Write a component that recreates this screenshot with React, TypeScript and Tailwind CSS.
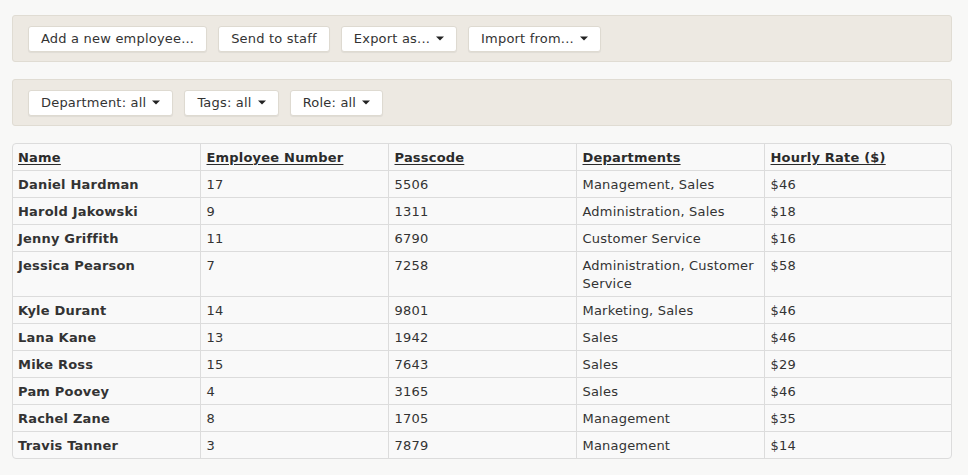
import React from "react";

const rows = [
  ["Daniel Hardman", "17", "5506", "Management, Sales", "$46"],
  ["Harold Jakowski", "9", "1311", "Administration, Sales", "$18"],
  ["Jenny Griffith", "11", "6790", "Customer Service", "$16"],
  ["Jessica Pearson", "7", "7258", "Administration, Customer Service", "$58"],
  ["Kyle Durant", "14", "9801", "Marketing, Sales", "$46"],
  ["Lana Kane", "13", "1942", "Sales", "$46"],
  ["Mike Ross", "15", "7643", "Sales", "$29"],
  ["Pam Poovey", "4", "3165", "Sales", "$46"],
  ["Rachel Zane", "8", "1705", "Management", "$35"],
  ["Travis Tanner", "3", "7879", "Management", "$14"],
];

const headers = ["Name", "Employee Number", "Passcode", "Departments", "Hourly Rate ($)"];

function Caret() {
  return (
    <svg width="8" height="5" viewBox="0 0 8 5" className="ml-[6px] inline-block">
      <path d="M0 0.5 L8 0.5 L4 4.5 Z" fill="#222" />
    </svg>
  );
}

function Btn({ label, caret }: { label: string; caret?: boolean }) {
  return (
    <button className="h-[26px] px-[12px] bg-white rounded-[3px] border border-[#dedad1] shadow-[0_1px_1px_rgba(0,0,0,0.06)] text-[13px] text-[#333] flex items-center tracking-[0.2px]">
      {label}
      {caret && <Caret />}
    </button>
  );
}

export default function App() {
  return (
    <div className="min-h-[475px] w-[968px] bg-[#f8f8f7] pt-[15px] px-[12px] text-[#333]" style={{ fontFamily: '"DejaVu Sans", Verdana, sans-serif' }}>
      <div className="w-[940px] h-[47px] bg-[#ede9e2] border border-[#e0dcd3] rounded-[3px] flex items-center gap-[11px] px-[15px]">
        <Btn label="Add a new employee..." />
        <Btn label="Send to staff" />
        <Btn label="Export as..." caret />
        <Btn label="Import from..." caret />
      </div>
      <div className="mt-[17px] w-[940px] h-[47px] bg-[#ede9e2] border border-[#e0dcd3] rounded-[3px] flex items-center gap-[11px] px-[15px]">
        <Btn label="Department: all" caret />
        <Btn label="Tags: all" caret />
        <Btn label="Role: all" caret />
      </div>
      <div className="mt-[17px] w-[940px] border border-[#dcdcdc] rounded-[4px] overflow-hidden bg-[#f9f9f9]">
        <table className="w-full border-collapse table-fixed text-[13px] leading-[18px] tracking-[0.2px]">
          <colgroup>
            <col className="w-[187px]" />
            <col className="w-[188px]" />
            <col className="w-[188px]" />
            <col className="w-[188px]" />
            <col />
          </colgroup>
          <thead>
            <tr>
              {headers.map((h, i) => (
                <th key={h} className={`text-left font-bold pr-[5px] ${i === 0 ? "pl-[5px]" : "pl-[6px]"} pt-[5px] pb-[3px] border-b border-[#dcdcdc] ${i < 4 ? "border-r" : ""}`}>
                  <span className="underline underline-offset-[2px] text-[#2b2b2b]">{h}</span>
                </th>
              ))}
            </tr>
          </thead>
          <tbody>
            {rows.map((r, ri) => (
              <tr key={r[0]}>
                {r.map((c, i) => (
                  <td
                    key={i}
                    className={`align-top pr-[5px] ${i === 0 ? "pl-[5px]" : "pl-[6px]"} pt-[5px] pb-[3px] border-[#dcdcdc] ${ri < rows.length - 1 ? "border-b" : ""} ${i < 4 ? "border-r" : ""} ${i === 0 ? "font-bold" : ""}`}
                  >
                    {c}
                  </td>
                ))}
              </tr>
            ))}
          </tbody>
        </table>
      </div>
    </div>
  );
}
